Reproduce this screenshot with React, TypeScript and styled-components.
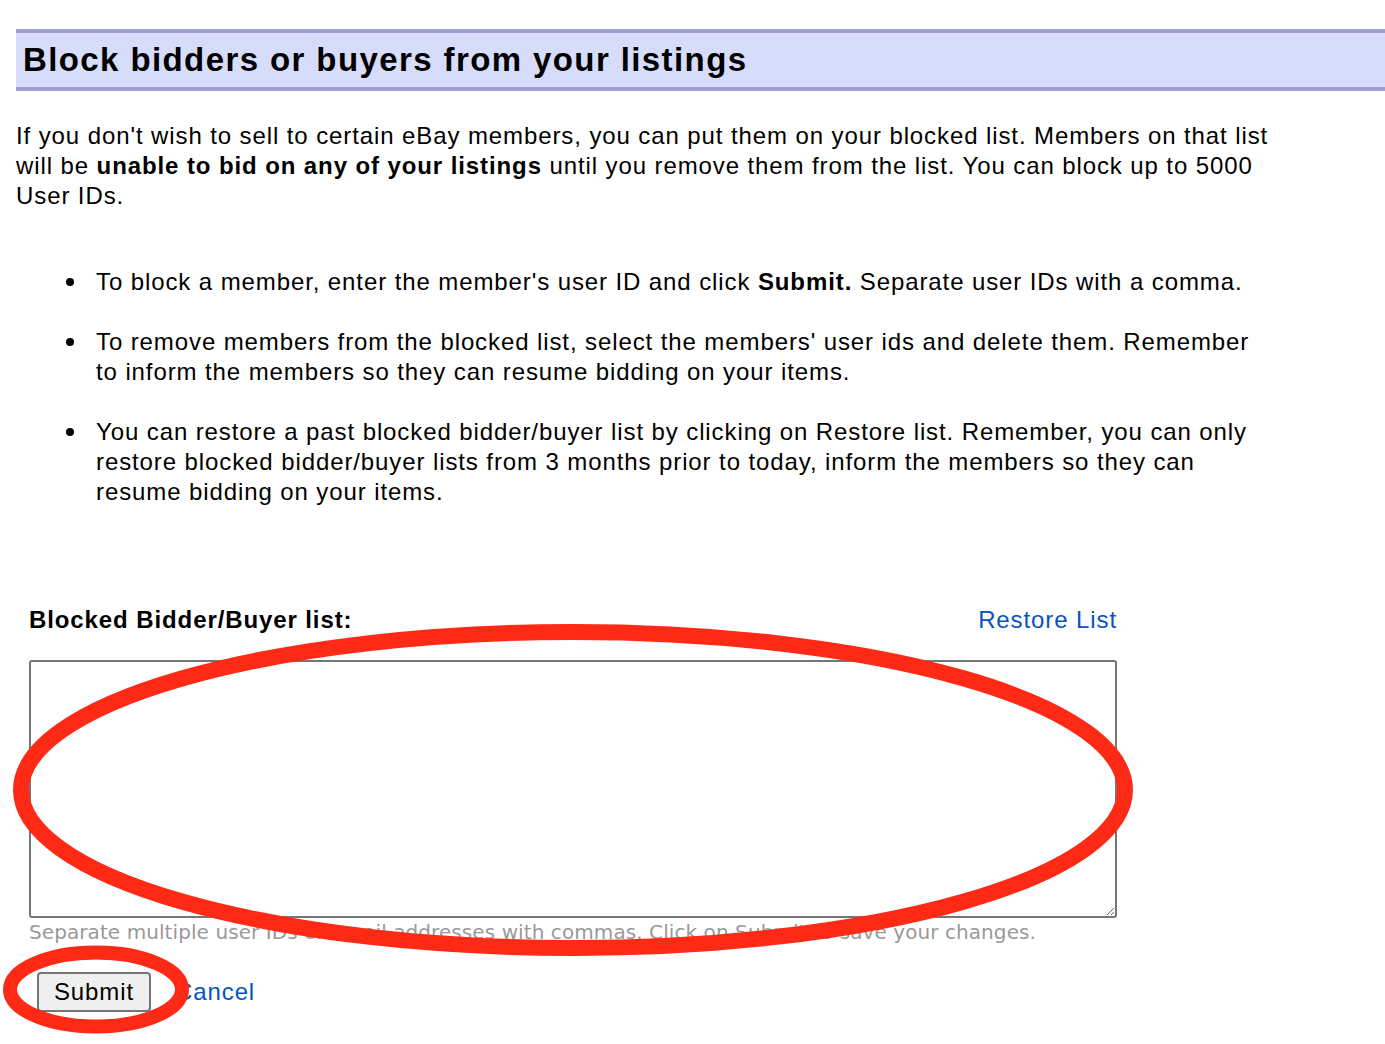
import styled, { createGlobalStyle } from 'styled-components';

const GlobalStyle = createGlobalStyle`
  html, body {
    margin: 0;
    padding: 0;
    background: #ffffff;
  }
  body {
    font-family: "Liberation Sans", Arial, sans-serif;
    color: #000000;
  }
`;

const Page = styled.div`
  position: relative;
  width: 1385px;
  min-height: 1044px;
  padding: 29px 0 0 16px;
  box-sizing: border-box;
  overflow: hidden;
`;

const TitleBar = styled.div`
  background-color: #d6dcfa;
  border-top: 4px solid #9e9ecf;
  border-bottom: 4px solid #9e9ecf;
  height: 54px;
  display: flex;
  align-items: center;
  padding-left: 7px;
`;

const Title = styled.h1`
  margin: 0;
  font-size: 33px;
  font-weight: 700;
  line-height: 40px;
  letter-spacing: 1.4px;
`;

const Content = styled.div`
  width: 1262px;
  font-size: 24px;
  line-height: 30px;
  letter-spacing: 0.9px;
`;

const Intro = styled.p`
  margin: 30px 0 56px;
`;

const Rules = styled.ul`
  margin: 0;
  padding-left: 80px;
  list-style: none;
  display: flex;
  flex-direction: column;
  gap: 30px;
`;

const Rule = styled.li`
  position: relative;

  &::before {
    content: '';
    position: absolute;
    left: -30px;
    top: 11px;
    width: 8px;
    height: 8px;
    border-radius: 50%;
    background: #000000;
  }
`;

const Form = styled.div`
  margin: 98px 0 0 13px;
  width: 1088px;
  display: flex;
  flex-direction: column;
`;

const FormHead = styled.div`
  display: flex;
  justify-content: space-between;
  align-items: center;
  font-size: 24px;
  line-height: 30px;
  letter-spacing: 0.9px;
`;

const Label = styled.label`
  font-weight: 700;
`;

const Link = styled.a`
  color: #0654ba;
  text-decoration: none;
  font-size: 24px;
  letter-spacing: 0.9px;
  cursor: pointer;
`;

const ListBox = styled.textarea`
  margin-top: 25px;
  width: 100%;
  height: 258px;
  box-sizing: border-box;
  border: 2px solid #767676;
  border-radius: 3px;
  padding: 4px;
  resize: both;
  font-family: "Liberation Mono", monospace;
  font-size: 18px;
`;

const Hint = styled.div`
  font-family: "DejaVu Sans", Verdana, sans-serif;
  font-size: 20px;
  line-height: 28px;
  letter-spacing: 0.08px;
  color: #999999;
  white-space: nowrap;
`;

const Actions = styled.div`
  display: flex;
  align-items: center;
  gap: 24px;
  margin-top: 26px;
  padding-left: 8px;
`;

const SubmitButton = styled.button`
  width: 114px;
  height: 40px;
  background: #efefef;
  border: 2px solid #767676;
  border-radius: 4px;
  font-family: "Liberation Sans", Arial, sans-serif;
  font-size: 24px;
  letter-spacing: 0.9px;
  color: #000000;
  padding: 0;
`;

const Markup = styled.svg`
  position: absolute;
  left: 0;
  top: 0;
  pointer-events: none;
`;

export default function App(): JSX.Element {
  return (
    <>
      <GlobalStyle />
      <Page>
        <TitleBar>
          <Title>Block bidders or buyers from your listings</Title>
        </TitleBar>
        <Content>
          <Intro>
            If you don't wish to sell to certain eBay members, you can put them on your blocked list. Members on that list will be{' '}
            <strong>unable to bid on any of your listings</strong> until you remove them from the list. You can block up to 5000 User IDs.
          </Intro>
          <Rules>
            <Rule>
              To block a member, enter the member's user ID and click <strong>Submit.</strong> Separate user IDs with a comma.
            </Rule>
            <Rule>
              To remove members from the blocked list, select the members' user ids and delete them. Remember to inform the members so they can resume bidding on your items.
            </Rule>
            <Rule>
              You can restore a past blocked bidder/buyer list by clicking on Restore list. Remember, you can only restore blocked bidder/buyer lists from 3 months prior to today, inform the members so they can resume bidding on your items.
            </Rule>
          </Rules>
        </Content>
        <Form>
          <FormHead>
            <Label htmlFor="blocked">Blocked Bidder/Buyer list:</Label>
            <Link>Restore List</Link>
          </FormHead>
          <ListBox id="blocked" />
          <Hint>Separate multiple user IDs or email addresses with commas. Click on Submit to save your changes.</Hint>
          <Actions>
            <SubmitButton type="button">Submit</SubmitButton>
            <Link>Cancel</Link>
          </Actions>
        </Form>
        <Markup width="1385" height="1044" viewBox="0 0 1385 1044">
          <ellipse cx="573" cy="790" rx="552" ry="158" fill="none" stroke="#fe2a15" strokeWidth="16" />
          <ellipse cx="96" cy="989.5" rx="86" ry="37" fill="none" stroke="#fe2a15" strokeWidth="14" />
        </Markup>
      </Page>
    </>
  );
}
